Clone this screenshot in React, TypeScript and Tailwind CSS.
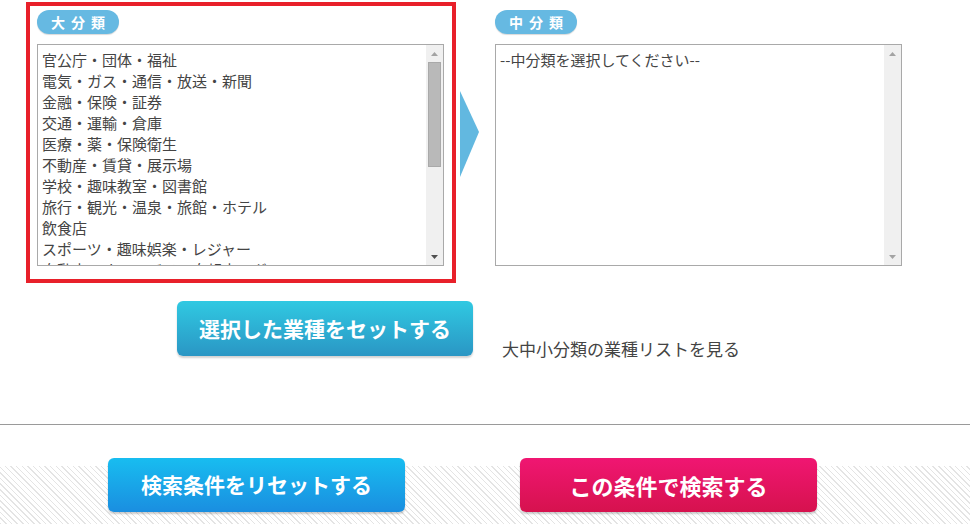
const majors = [
  '官公庁・団体・福祉',
  '電気・ガス・通信・放送・新聞',
  '金融・保険・証券',
  '交通・運輸・倉庫',
  '医療・薬・保険衛生',
  '不動産・賃貸・展示場',
  '学校・趣味教室・図書館',
  '旅行・観光・温泉・旅館・ホテル',
  '飲食店',
  'スポーツ・趣味娯楽・レジャー',
  '自動車・オートバイ・自転車・ガソリン',
];

const Badge = ({ label }: { label: string }) => (
  <div className="w-[82px] h-[24px] rounded-full bg-[#66b9e2] flex items-center justify-center pl-[6px] text-white text-[14px] font-bold tracking-[6px] leading-none shadow-[0_1px_1px_rgba(0,0,0,0.15)]">
    {label}
  </div>
);

const Scrollbar = ({ active }: { active: boolean }) => (
  <div className="w-[17px] h-full bg-[#f0f0f0] flex flex-col items-center">
    <div className="h-[17px] w-full flex items-center justify-center">
      <svg width="7" height="4" viewBox="0 0 7 4">
        <polygon points="0,4 3.5,0 7,4" fill="#a3a3a3" />
      </svg>
    </div>
    {active ? (
      <div className="w-[13px] h-[105px] bg-[#b9b9b9] border border-[#a9a9a9]" />
    ) : null}
    <div className="flex-1" />
    <div className="h-[17px] w-full flex items-center justify-center">
      <svg width="7" height="4" viewBox="0 0 7 4">
        <polygon points="0,0 3.5,4 7,0" fill={active ? '#505050' : '#a3a3a3'} />
      </svg>
    </div>
  </div>
);

const ListBox = ({ items, active }: { items: string[]; active: boolean }) => (
  <div className="w-[407px] h-[222px] border border-[#a9a9a9] bg-white flex overflow-hidden">
    <div className="flex-1 pt-[4px] pl-[4px] overflow-hidden">
      {items.map((t) => (
        <div key={t} className="h-[21px] text-[15px] leading-[21px] text-[#444] whitespace-nowrap">
          {t}
        </div>
      ))}
    </div>
    <Scrollbar active={active} />
  </div>
);

export default function App() {
  return (
    <div
      className="w-[970px] h-[524px] bg-white overflow-hidden"
      style={{ fontFamily: '"Noto Sans CJK JP", "Noto Sans", sans-serif' }}
    >
      <div className="flex items-start pt-[2px] pl-[26px]">
        <div className="border-4 border-[#e8202a] pt-[4px] pl-[7px] pr-[8px] pb-[13px]">
          <Badge label="大分類" />
          <div className="mt-[10px]">
            <ListBox items={majors} active />
          </div>
        </div>
        <svg className="ml-[4px] mt-[89px]" width="20" height="87" viewBox="0 0 20 87">
          <polygon points="0,0 19,41 0,86" fill="#62b8e0" />
        </svg>
        <div className="ml-[15px] pt-[8px]">
          <Badge label="中分類" />
          <div className="mt-[10px]">
            <ListBox items={['--中分類を選択してください--']} active={false} />
          </div>
        </div>
      </div>

      <div className="flex items-start pl-[177px] mt-[18px]">
        <button className="w-[296px] h-[55px] rounded-[6px] bg-[linear-gradient(to_bottom,#30c9e2,#2a96c4)] text-white text-[21px] font-bold shadow-[0_2px_2px_rgba(0,0,0,0.18)]">
          選択した業種をセットする
        </button>
        <a href="#" className="ml-[29px] mt-[38px] text-[17px] leading-[20px] text-[#444]">
          大中小分類の業種リストを見る
        </a>
      </div>

      <div className="mt-[65px] h-px bg-[#9a9a9a]" />

      <div className="h-[99px] bg-[linear-gradient(to_bottom,#fff_41px,transparent_41px),repeating-linear-gradient(45deg,#e4e4e4_0,#e4e4e4_1px,#fff_1px,#fff_4px)] flex pl-[108px] pt-[33px] gap-[115px]">
        <button className="w-[297px] h-[54px] rounded-[6px] bg-[linear-gradient(to_bottom,#18bdf0,#1a8ee0)] text-white text-[21px] font-bold shadow-[0_2px_2px_rgba(0,0,0,0.2)]">
          検索条件をリセットする
        </button>
        <button className="w-[297px] h-[54px] rounded-[6px] bg-[linear-gradient(to_bottom,#f01672,#d6124e)] text-white text-[22px] font-bold shadow-[0_2px_2px_rgba(0,0,0,0.2)]">
          この条件で検索する
        </button>
      </div>
    </div>
  );
}
